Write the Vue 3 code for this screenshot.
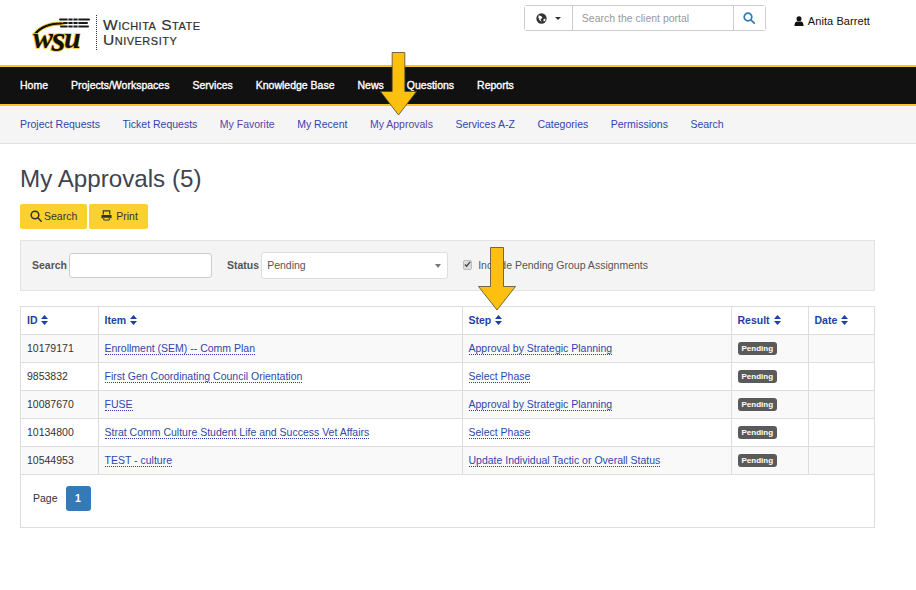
<script setup>
const primary = ['Home', 'Projects/Workspaces', 'Services', 'Knowledge Base', 'News', 'Questions', 'Reports']
const secondary = [
  { label: 'Project Requests' },
  { label: 'Ticket Requests' },
  { label: 'My Favorite', visited: true },
  { label: 'My Recent' },
  { label: 'My Approvals', visited: true },
  { label: 'Services A-Z' },
  { label: 'Categories' },
  { label: 'Permissions' },
  { label: 'Search' }
]
const headers = ['ID', 'Item', 'Step', 'Result', 'Date']
const rows = [
  ['10179171', 'Enrollment (SEM) -- Comm Plan', 'Approval by Strategic Planning'],
  ['9853832', 'First Gen Coordinating Council Orientation', 'Select Phase'],
  ['10087670', 'FUSE', 'Approval by Strategic Planning'],
  ['10134800', 'Strat Comm Culture Student Life and Success Vet Affairs', 'Select Phase'],
  ['10544953', 'TEST - culture', 'Update Individual Tactic or Overall Status']
]
</script>

<template>
  <div class="page">
    <header class="top">
      <div class="logo">
        <svg class="mark" viewBox="0 -5 60 54" width="60" height="54" aria-hidden="true">
          <path d="M2 24 C9 15 19 12 30 12 L38 13 L30 15 C20 15 11 18 5 25Z" fill="#111" stroke="#fdc520" stroke-width=".9"/>
          <g fill="none" stroke="#1a1a1a" stroke-width="2" stroke-linecap="round">
            <path d="M29 9.500h29M33 13h23M30 16.500h27"/>
          </g>
          <g fill="none" stroke="#fff" stroke-width=".8">
            <path d="M37 7v12M42 7v12M47 7v12"/>
          </g>
          <text x="2" y="38" class="mark-text">w<tspan class="mark-s" dy="3">s</tspan><tspan dy="-3">u</tspan></text>
        </svg>
        <span class="dots"></span>
        <div class="wordmark"><span>Wichita State</span><span>University</span></div>
      </div>
      <div class="tools">
        <div class="search-group">
          <button class="lang">
            <svg width="11" height="11" viewBox="0 0 12 12"><circle cx="6" cy="6" r="5.600" fill="#333"/><path d="M3 2.500l3 1 1 2-2 1 1 3-2-1.500-1.500-3zM8 7l2-1 .5 2-2 1.500z" fill="#fff"/></svg>
            <i class="caret"></i>
          </button>
          <input class="portal" placeholder="Search the client portal" />
          <button class="go">
            <svg width="12" height="12" viewBox="0 0 12 12" fill="none" stroke="#337ab7" stroke-width="1.700"><circle cx="5" cy="5" r="3.800"/><path d="M7.800 7.800l3.400 3.400" stroke-linecap="round"/></svg>
          </button>
        </div>
        <div class="user">
          <svg width="10" height="10" viewBox="0 0 10 10"><circle cx="5" cy="2.800" r="2.500" fill="#111"/><path d="M.5 10c0-3 1-4.500 2.500-4.500h4C8.500 5.500 9.500 7 9.500 10z" fill="#111"/></svg>
          <span>Anita Barrett</span>
        </div>
      </div>
    </header>

    <nav class="primary">
      <a v-for="p in primary" :key="p">{{ p }}</a>
    </nav>
    <nav class="secondary">
      <a v-for="s in secondary" :key="s.label" :class="{ visited: s.visited }">{{ s.label }}</a>
    </nav>

    <main class="content">
      <h1>My Approvals (5)</h1>
      <div class="actions">
        <button class="yellow">
          <svg width="12" height="12" viewBox="0 0 12 12" fill="none" stroke="#333" stroke-width="1.500"><circle cx="5" cy="5" r="3.800"/><path d="M7.800 7.800l3.400 3.400" stroke-linecap="round"/></svg>
          Search
        </button>
        <button class="yellow print">
          <svg width="11" height="11" viewBox="0 0 12 12"><path d="M2.500 5V1h7v4" fill="none" stroke="#333" stroke-width="1.300"/><path d="M.5 5.500h11V9h-2V7.500h-7V9h-2z" fill="#333"/><path d="M3 8h6v3H3z" fill="none" stroke="#333"/></svg>
          Print
        </button>
      </div>

      <section class="filter">
        <label>Search</label>
        <input class="f-search" />
        <label class="status">Status</label>
        <div class="select">Pending<i></i></div>
        <span class="check"><svg width="7" height="7" viewBox="0 0 8 8"><path d="M1 4l2 2 4-5" fill="none" stroke="#444" stroke-width="1.500"/></svg></span>
        <span class="include">Include Pending Group Assignments</span>
      </section>

      <div class="panel">
        <table>
          <colgroup>
            <col class="c1" /><col class="c2" /><col class="c3" /><col class="c4" /><col class="c5" />
          </colgroup>
          <thead>
            <tr>
              <th v-for="h in headers" :key="h">
                {{ h }}
                <svg class="sort" width="7" height="10" viewBox="0 0 7 10"><path d="M3.500 0L7 4H0zM3.500 10L0 6h7z" fill="#1c3fa8"/></svg>
              </th>
            </tr>
          </thead>
          <tbody>
            <tr v-for="r in rows" :key="r[0]">
              <td>{{ r[0] }}</td>
              <td><a>{{ r[1] }}</a></td>
              <td><a>{{ r[2] }}</a></td>
              <td><span class="badge">Pending</span></td>
              <td></td>
            </tr>
          </tbody>
        </table>
        <div class="pager">
          <span>Page</span>
          <b>1</b>
        </div>
      </div>
    </main>

    <svg class="arrow a1" width="37" height="64" viewBox="0 0 38 64" preserveAspectRatio="none"><path d="M12.500.5h13v39h12L19 63 .5 39.500h12z" fill="#fec010" stroke="#4d4a35" stroke-width=".8"/></svg>
    <svg class="arrow a2" width="38" height="64" viewBox="0 0 38 64"><path d="M12.500.5h13v39h12L19 63 .5 39.500h12z" fill="#fec010" stroke="#4d4a35" stroke-width=".8"/></svg>
  </div>
</template>

<style>
body { margin: 0; background: #fff; }
</style>

<style scoped>
.page {
  position: relative;
  width: 916px;
  height: 590px;
  overflow: hidden;
  font-family: "Liberation Sans", Arial, sans-serif;
  font-size: 10.500px;
  color: #333;
}
.top {
  height: 65px;
  display: flex;
  justify-content: space-between;
}
.logo {
  display: flex;
  align-items: center;
  padding: 12px 0 0 31px;
  height: 40px;
}
.mark-text {
  font-family: "Liberation Serif", serif;
  font-weight: 700;
  font-style: italic;
  font-size: 30px;
  letter-spacing: -1.500px;
  fill: #111;
  stroke: #fdc520;
  stroke-width: 1.600px;
  paint-order: stroke;
}
.mark-s { font-size: 36px; }
.dots {
  height: 35px;
  margin: 0 6px 0 5px;
  border-left: 1px dotted #333;
}
.wordmark {
  display: flex;
  flex-direction: column;
  font-variant: small-caps;
  font-size: 15.500px;
  line-height: 15px;
  letter-spacing: .5px;
  color: #2f2f2f;
  -webkit-text-stroke: .2px #2f2f2f;
}
.tools {
  display: flex;
  align-items: flex-start;
  padding: 5px 46px 0 0;
}
.search-group {
  display: flex;
  width: 242px;
  height: 26px;
  box-sizing: border-box;
  border: 1px solid #ccc;
  border-radius: 3px;
}
.lang {
  width: 48px;
  display: flex;
  align-items: center;
  justify-content: center;
  gap: 8px;
  padding: 0;
  border: 0;
  border-right: 1px solid #ccc;
  background: #fff;
}
.caret {
  border: 3.500px solid transparent;
  border-top-color: #333;
  border-bottom: 0;
}
.portal {
  flex: 1;
  min-width: 0;
  border: 0;
  outline: 0;
  padding: 0 9px;
  font: inherit;
}
.portal::placeholder { color: #999; opacity: 1; }
.go {
  width: 32px;
  padding: 0;
  border: 0;
  border-left: 1px solid #ccc;
  background: #fff;
  display: flex;
  align-items: center;
  justify-content: center;
}
.user {
  margin: 10px 0 0 28px;
  display: flex;
  align-items: center;
  gap: 4px;
  font-size: 11px;
  letter-spacing: .08px;
  color: #111;
}
.primary {
  height: 37px;
  display: flex;
  align-items: center;
  gap: 23px;
  padding-left: 20px;
  background: #111;
  border-top: 2px solid #fdc520;
  border-bottom: 2px solid #fdc520;
}
.primary a {
  padding-bottom: 2px;
  color: #fff;
  -webkit-text-stroke: .35px #fff;
}
.secondary {
  height: 37px;
  display: flex;
  align-items: center;
  gap: 22.500px;
  padding-left: 20px;
  background: #f5f5f5;
  border-bottom: 1px solid #e1e1e1;
}
.secondary a { padding-bottom: 2px; color: #2f46ab; }
.secondary a.visited { color: #5a43a8; }
.content { padding: 0 41px 0 20px; }
h1 {
  margin: 20px 0 0;
  font-size: 24.200px;
  line-height: 30px;
  font-weight: 400;
  color: #3f4450;
}
.actions {
  display: flex;
  gap: 2px;
  margin-top: 10px;
}
.yellow {
  height: 25px;
  display: flex;
  align-items: center;
  gap: 2px;
  padding: 0 10px 2px;
  border: 0;
  border-radius: 2px;
  background: #fad12e;
  color: #333;
  font: inherit;
}
.print { gap: 4px; padding: 0 10px 2px 12px; }
.filter {
  margin-top: 11px;
  height: 51px;
  box-sizing: border-box;
  display: flex;
  align-items: center;
  padding: 0 0 2px 11px;
  background: #f4f4f4;
  border: 1px solid #e3e3e3;
  color: #555;
}
.filter label { font-weight: 700; }
.f-search {
  width: 143px;
  height: 25px;
  box-sizing: border-box;
  margin: 1px 0 0 2px;
  border: 1px solid #ccc;
  border-radius: 3px;
  background: #fff;
}
.status { margin-left: 15px; }
.select {
  position: relative;
  width: 187px;
  height: 27px;
  box-sizing: border-box;
  margin: 2px 0 0 2px;
  padding-left: 5px;
  line-height: 25px;
  background: #fff;
  border: 1px solid #ddd;
  border-radius: 3px;
}
.select i {
  position: absolute;
  right: 6px;
  top: 11px;
  border: 3px solid transparent;
  border-top: 4px solid #777;
  border-bottom: 0;
}
.check {
  width: 7px;
  height: 8px;
  margin-left: 15px;
  display: flex;
  align-items: center;
  justify-content: center;
  background: #ddd;
  border: 1px solid #bbb;
  border-radius: 2px;
}
.include { margin-left: 6px; }
.panel {
  margin-top: 15px;
  height: 222px;
  box-sizing: border-box;
  border: 1px solid #ddd;
}
table {
  width: 100%;
  border-collapse: collapse;
  table-layout: fixed;
}
.c1 { width: 77px; }
.c2 { width: 364px; }
.c3 { width: 269px; }
.c4 { width: 77px; }
th, td {
  height: 28px;
  box-sizing: border-box;
  padding: 0 6px;
  border: 1px solid #ddd;
  text-align: left;
}
tr > :first-child { border-left: 0; }
tr > :last-child { border-right: 0; }
thead tr > * { border-top: 0; }
th { color: #1c3fa8; font-weight: 700; height: 27px; }
.sort { margin-left: 1px; vertical-align: -1px; }
tbody tr:nth-child(odd) td { background: #f9f9f9; }
td a {
  color: #2f46ab;
  border-bottom: 1px dotted #2a3d9e;
}
.badge {
  display: inline-block;
  padding: 0 4px;
  line-height: 13px;
  font-size: 8px;
  font-weight: 700;
  color: #fff;
  background: #5a5a5a;
  border-radius: 3px;
  vertical-align: middle;
}
.pager {
  display: flex;
  align-items: center;
  gap: 8px;
  padding: 11px 12px;
  color: #333;
}
.pager b {
  width: 25px;
  height: 25px;
  line-height: 25px;
  text-align: center;
  color: #fff;
  background: #337ab7;
  border-radius: 3px;
}
.arrow { position: absolute; }
.a1 { left: 380px; top: 52px; }
.a2 { left: 478px; top: 247px; }
</style>
